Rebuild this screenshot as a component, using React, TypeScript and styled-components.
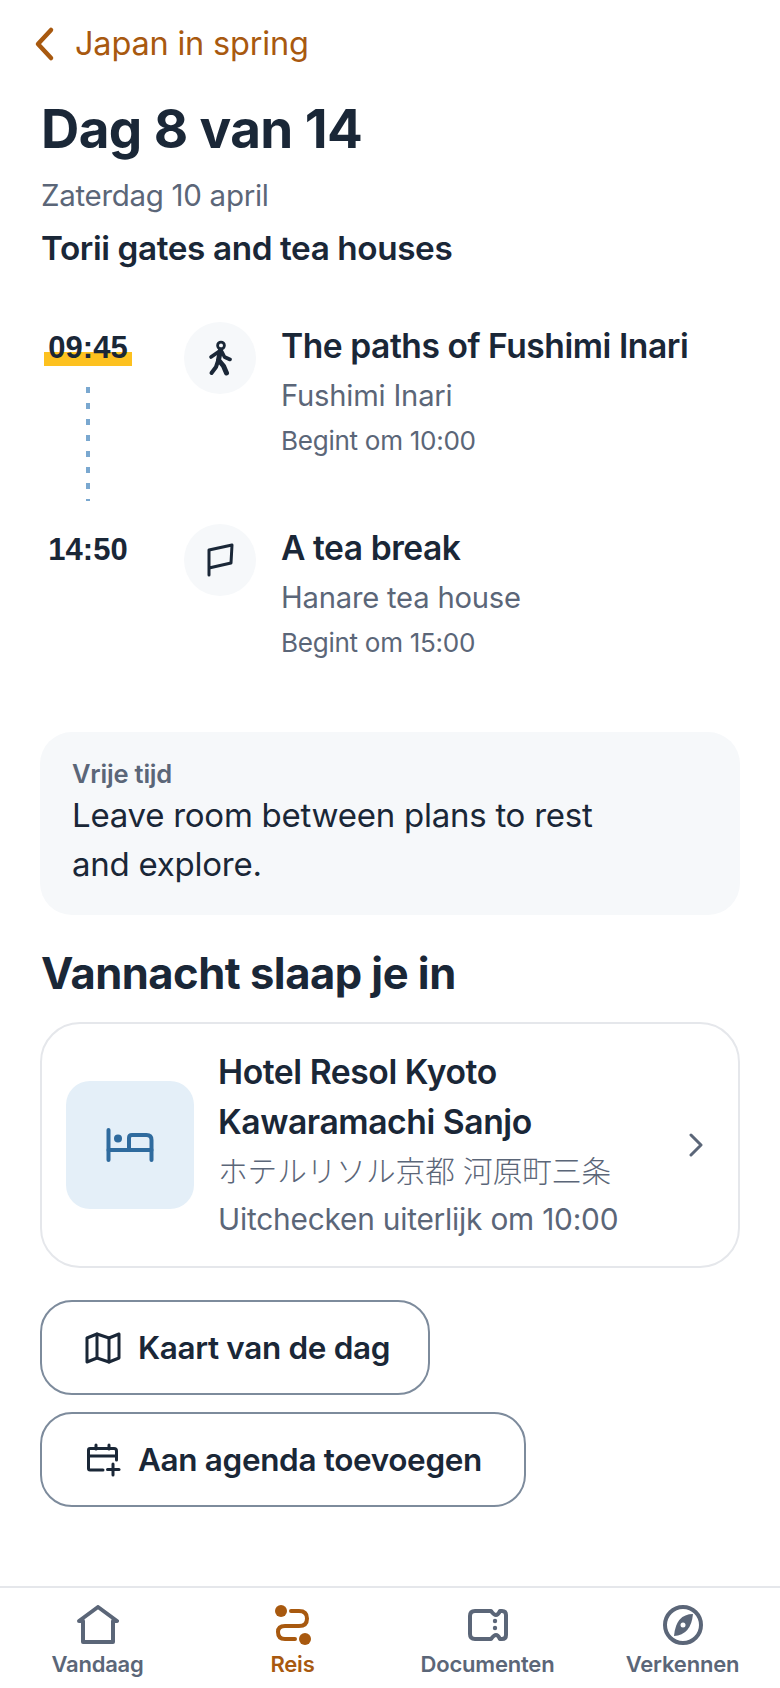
import React from "react";
import styled, {createGlobalStyle} from "styled-components";

const GlobalStyle = createGlobalStyle`
  html, body {
    margin: 0;
    padding: 0;
    background: #ffffff;
  }
  * {
    box-sizing: border-box;
  }
  body {
    font-family: Inter, "Noto Sans CJK JP", sans-serif;
    color: #1a2737;
  }
`;

const Page = styled.div`
  width: 780px;
  height: 1688px;
  display: flex;
  flex-direction: column;
`;
const Main = styled.main`
  flex: 1;
  padding: 0 40px;
`;
const BackRow = styled.div`
  display: flex;
  align-items: center;
  gap: 18px;
  height: 44px;
  margin: 22px 0 0 -7px;
  color: #a8590f;
  font-size: 32.5px;
  line-height: 44px;
  letter-spacing: -0.2px;
`;
const Title = styled.h1`
  margin: 33px 0 0 1px;
  font-size: 53px;
  line-height: 60px;
  font-weight: 700;
  letter-spacing: -0.6px;
`;
const DateText = styled.div`
  margin: 16px 0 0 1px;
  font-size: 29.5px;
  line-height: 40px;
  color: #5b6678;
  letter-spacing: -0.3px;
`;
const Subtitle = styled.div`
  margin: 10px 0 0 1px;
  font-size: 33.3px;
  line-height: 46px;
  font-weight: 600;
  letter-spacing: -0.4px;
`;
const Timeline = styled.div`
  margin-top: 51px;
  display: flex;
  flex-direction: column;
  gap: 18px;
`;
const Stop = styled.div<{$height: number}>`
  display: grid;
  grid-template-columns: 144px 97px 1fr;
  height: ${props => props.$height}px;
`;
const TimeColumn = styled.div`
  display: flex;
  flex-direction: column;
  align-items: center;
  width: 96px;
`;
const Time = styled.div<{$active?: boolean}>`
  font-family: "Liberation Sans", sans-serif;
  font-weight: 700;
  font-size: 31px;
  line-height: 32px;
  margin-top: 10px;
  padding: 0 4px 2px;
  background: ${props =>
    props.$active
      ? "linear-gradient(to bottom, transparent 20px, #fdc11f 20px)"
      : "transparent"};
`;
const Dots = styled.div`
  width: 4px;
  height: 114px;
  margin-top: 21px;
  background: repeating-linear-gradient(
    to bottom,
    #7aa8d0 0,
    #7aa8d0 6px,
    transparent 6px,
    transparent 16px
  );
`;
const IconCircle = styled.div`
  width: 72px;
  height: 72px;
  border-radius: 50%;
  background: #f6f8fa;
  display: flex;
  align-items: center;
  justify-content: center;
`;
const StopBody = styled.div`
  display: flex;
  flex-direction: column;
`;
const StopTitle = styled.div`
  font-size: 33.6px;
  line-height: 48px;
  font-weight: 600;
  letter-spacing: -0.45px;
`;
const StopPlace = styled.div`
  font-size: 29.2px;
  line-height: 42px;
  margin-top: 5px;
  color: #5b6678;
  letter-spacing: -0.2px;
`;
const StopStart = styled.div`
  font-size: 26.1px;
  line-height: 36px;
  margin-top: 6px;
  color: #5b6678;
  letter-spacing: -0.3px;
`;
const FreeCard = styled.div`
  margin-top: 68px;
  height: 183px;
  border-radius: 32px;
  background: #f6f8fa;
  padding: 27px 32px;
`;
const FreeLabel = styled.div`
  font-size: 25.5px;
  line-height: 30px;
  font-weight: 600;
  color: #5b6678;
  letter-spacing: -0.2px;
  margin-bottom: 2px;
`;
const FreeText = styled.div`
  font-size: 33px;
  line-height: 49px;
  width: 560px;
  letter-spacing: -0.25px;
`;
const SectionTitle = styled.h2`
  margin: 31px 0 0 1px;
  font-size: 43.5px;
  line-height: 54px;
  font-weight: 700;
  letter-spacing: -0.5px;
`;
const HotelCard = styled.div`
  margin-top: 22px;
  height: 246px;
  border: 2px solid #e5e7eb;
  border-radius: 40px;
  display: flex;
  align-items: center;
  padding: 0 34px 0 24px;
`;
const HotelIcon = styled.div`
  width: 128px;
  height: 128px;
  flex-shrink: 0;
  border-radius: 24px;
  background: #e4eff8;
  display: flex;
  align-items: center;
  justify-content: center;
`;
const HotelBody = styled.div`
  flex: 1;
  margin-left: 24px;
`;
const HotelName = styled.div`
  font-size: 33.7px;
  line-height: 50px;
  font-weight: 600;
  letter-spacing: -0.45px;
`;
const HotelNative = styled.div`
  font-size: 29.6px;
  line-height: 46px;
  margin-top: 1px;
  font-weight: 300;
  color: #5b6678;
`;
const HotelCheckout = styled.div`
  font-size: 29.8px;
  line-height: 50px;
  color: #5b6678;
  letter-spacing: -0.2px;
`;
const Actions = styled.div`
  margin-top: 32px;
  display: flex;
  flex-direction: column;
  align-items: flex-start;
  gap: 17px;
`;
const ActionButton = styled.button<{$width: number}>`
  width: ${props => props.$width}px;
  height: 95px;
  border: 2px solid #7d8b9c;
  border-radius: 32px;
  background: #ffffff;
  padding: 0 0 0 43px;
  display: flex;
  align-items: center;
  gap: 17px;
  font-family: inherit;
  font-size: 31.5px;
  font-weight: 600;
  color: #1a2737;
  letter-spacing: -0.35px;
`;
const Nav = styled.nav`
  height: 102px;
  border-top: 2px solid #e5e7eb;
  display: grid;
  grid-template-columns: repeat(4, 1fr);
  padding-top: 14px;
`;
const NavItem = styled.div<{$active?: boolean}>`
  display: flex;
  flex-direction: column;
  align-items: center;
  font-size: 22px;
  line-height: 32px;
  font-weight: 600;
  letter-spacing: -0.2px;
  color: ${props => (props.$active ? "#a8590f" : "#5b6678")};
`;
const NavGlyph = styled.div`
  height: 46px;
  display: flex;
  align-items: center;
  justify-content: center;
`;

const BackIcon = () => (
  <svg width="24" height="36" viewBox="0 0 24 36" fill="none" stroke="currentColor" strokeWidth="4.5" strokeLinecap="round" strokeLinejoin="round">
    <path d="M18 4 L5 18 L18 32" />
  </svg>
);
const WalkIcon = () => (
  <svg width="24" height="36" viewBox="0 0 24 36" fill="none" stroke="#1a2737" strokeWidth="3.6" strokeLinecap="round" strokeLinejoin="round">
    <circle cx="13" cy="5.500" r="3.400" strokeWidth="2.800" />
    <path d="M12.500 10 L10.500 20 L15.500 26 L18.500 33" strokeWidth="5" />
    <path d="M10 21 L8 27 L3.500 33" strokeWidth="4" />
    <path d="M11 11.500 L3 17" />
    <path d="M14 12 L16.500 17 L22 19.500" />
  </svg>
);
const FlagIcon = () => (
  <svg width="28" height="36" viewBox="0 0 28 36" fill="none" stroke="#1a2737" strokeWidth="3" strokeLinecap="round" strokeLinejoin="round">
    <path d="M3 33 L3 8 L26 3 L25 21 L3 26" />
  </svg>
);
const BedIcon = () => (
  <svg width="48" height="34" viewBox="0 0 48 34" fill="none" stroke="#2f6b9e" strokeWidth="4" strokeLinecap="round" strokeLinejoin="round">
    <path d="M2.500 2 L2.500 32" />
    <path d="M2.500 22 L45.500 22" />
    <path d="M45.500 32 L45.500 12 Q45.500 7 40.500 7 L26 7 Q23 7 23 10 L23 22" />
    <circle cx="12" cy="10.500" r="4" fill="#2f6b9e" stroke="none" />
  </svg>
);
const ChevronIcon = () => (
  <svg width="16" height="24" viewBox="0 0 16 24" fill="none" stroke="#5b6678" strokeWidth="3" strokeLinecap="round" strokeLinejoin="round">
    <path d="M3 2 L13 12 L3 22" />
  </svg>
);
const MapIcon = () => (
  <svg width="36" height="32" viewBox="0 0 36 32" fill="none" stroke="#1a2737" strokeWidth="3" strokeLinejoin="round" strokeLinecap="round">
    <path d="M2 6 L12 2 L24 6 L34 2 L34 26 L24 30 L12 26 L2 30 Z" />
    <path d="M12 2 L12 26" />
    <path d="M24 6 L24 30" />
  </svg>
);
const CalendarPlusIcon = () => (
  <svg width="36" height="34" viewBox="-2 0 36 34" fill="none" stroke="#1a2737" strokeWidth="3" strokeLinejoin="round" strokeLinecap="round">
    <path d="M16 27 L3 27 Q1.500 27 1.500 25.500 L1.500 7 Q1.500 5.500 3 5.500 L27 5.500 Q29.500 5.500 29.500 8 L29.500 17" />
    <path d="M1.500 13 L29.500 13" />
    <path d="M9 2 L9 6" />
    <path d="M22 2 L22 6" />
    <path d="M26 21 L26 32" />
    <path d="M20.500 26.500 L32 26.500" />
  </svg>
);
const HomeIcon = () => (
  <svg width="42" height="40" viewBox="0 0 42 40" fill="none" stroke="currentColor" strokeWidth="4" strokeLinejoin="round" strokeLinecap="round">
    <path d="M2 16 L21 2 L40 16 L36 16 L36 37 L6 37 L6 16 Z" />
  </svg>
);
const RouteIcon = () => (
  <svg width="38" height="42" viewBox="0 0 38 42" fill="none" stroke="currentColor" strokeWidth="4" strokeLinecap="round">
    <circle cx="7" cy="7" r="6" fill="currentColor" stroke="none" />
    <circle cx="31" cy="35" r="6" fill="currentColor" stroke="none" />
    <path d="M17 7 L25 7 Q33 7 33 14.500 Q33 22 25 22 L11 22 Q4 22 4 28 Q4 35 11 35 L21 35" />
  </svg>
);
const TicketIcon = () => (
  <svg width="40" height="34" viewBox="0 0 40 34" fill="none" stroke="currentColor" strokeWidth="4" strokeLinejoin="round">
    <path d="M7 3 L23 3 Q26 7 28 7 Q30 7 32 3 L34 3 Q38 3 38 7 L38 27 Q38 31 34 31 L32 31 Q30 27 28 27 Q26 27 23 31 L7 31 Q2 31 2 26 L2 8 Q2 3 7 3 Z" />
    <circle cx="27" cy="13" r="2.200" fill="currentColor" stroke="none" />
    <circle cx="27" cy="20" r="2.200" fill="currentColor" stroke="none" />
  </svg>
);
const CompassIcon = () => (
  <svg width="40" height="40" viewBox="0 0 40 40" fill="none" stroke="currentColor" strokeWidth="4">
    <circle cx="20" cy="20" r="18" />
    <path d="M30 9 Q13 9 11 31 Q28 30 30 9 Z" fill="currentColor" stroke="none" />
    <circle cx="20" cy="20" r="2.500" fill="#ffffff" stroke="none" />
  </svg>
);

const App = () => {
  return (
    <Page>
      <GlobalStyle />
      <Main>
        <BackRow>
          <BackIcon />
          Japan in spring
        </BackRow>
        <Title>Dag 8 van 14</Title>
        <DateText>Zaterdag 10 april</DateText>
        <Subtitle>Torii gates and tea houses</Subtitle>
        <Timeline>
          <Stop $height={184}>
            <TimeColumn>
              <Time $active>09:45</Time>
              <Dots />
            </TimeColumn>
            <IconCircle>
              <WalkIcon />
            </IconCircle>
            <StopBody>
              <StopTitle>The paths of Fushimi Inari</StopTitle>
              <StopPlace>Fushimi Inari</StopPlace>
              <StopStart>Begint om 10:00</StopStart>
            </StopBody>
          </Stop>
          <Stop $height={140}>
            <TimeColumn>
              <Time>14:50</Time>
            </TimeColumn>
            <IconCircle>
              <FlagIcon />
            </IconCircle>
            <StopBody>
              <StopTitle>A tea break</StopTitle>
              <StopPlace>Hanare tea house</StopPlace>
              <StopStart>Begint om 15:00</StopStart>
            </StopBody>
          </Stop>
        </Timeline>
        <FreeCard>
          <FreeLabel>Vrije tijd</FreeLabel>
          <FreeText>Leave room between plans to rest and explore.</FreeText>
        </FreeCard>
        <SectionTitle>Vannacht slaap je in</SectionTitle>
        <HotelCard>
          <HotelIcon>
            <BedIcon />
          </HotelIcon>
          <HotelBody>
            <HotelName>
              Hotel Resol Kyoto
              <br />
              Kawaramachi Sanjo
            </HotelName>
            <HotelNative>ホテルリソル京都 河原町三条</HotelNative>
            <HotelCheckout>Uitchecken uiterlijk om 10:00</HotelCheckout>
          </HotelBody>
          <ChevronIcon />
        </HotelCard>
        <Actions>
          <ActionButton $width={390}>
            <MapIcon />
            Kaart van de dag
          </ActionButton>
          <ActionButton $width={486}>
            <CalendarPlusIcon />
            Aan agenda toevoegen
          </ActionButton>
        </Actions>
      </Main>
      <Nav>
        <NavItem>
          <NavGlyph>
            <HomeIcon />
          </NavGlyph>
          Vandaag
        </NavItem>
        <NavItem $active>
          <NavGlyph>
            <RouteIcon />
          </NavGlyph>
          Reis
        </NavItem>
        <NavItem>
          <NavGlyph>
            <TicketIcon />
          </NavGlyph>
          Documenten
        </NavItem>
        <NavItem>
          <NavGlyph>
            <CompassIcon />
          </NavGlyph>
          Verkennen
        </NavItem>
      </Nav>
    </Page>
  );
};

export default App;
